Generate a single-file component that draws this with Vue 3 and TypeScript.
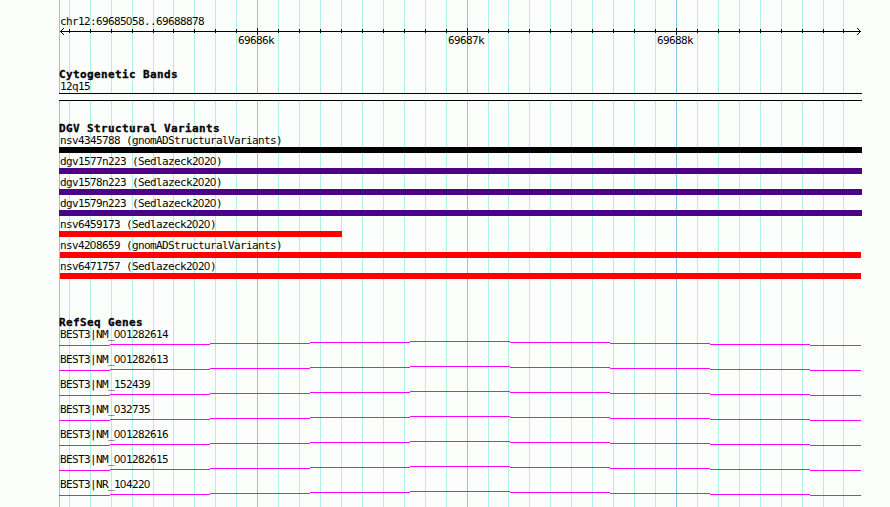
<script setup lang="ts">
interface Variant {
  name: string
  color: string
  start: number
  width: number
}

const minorLines: number[] = [
  69, 90, 111, 132, 153, 173, 194, 215, 236, 278, 299, 320, 341, 362, 383, 404,
  425, 446, 488, 508, 529, 550, 571, 592, 613, 634, 655, 697, 718, 739, 760,
  781, 802, 823, 843,
]
const majorLines = [
  { x: 257, label: '69686k' },
  { x: 467, label: '69687k' },
  { x: 676, label: '69688k' },
]

const variants: Variant[] = [
  { name: 'nsv4345788 (gnomADStructuralVariants)', color: '#040204', start: 0, width: 803 },
  { name: 'dgv1577n223 (Sedlazeck2020)', color: '#4c0284', start: 0, width: 803 },
  { name: 'dgv1578n223 (Sedlazeck2020)', color: '#4c0284', start: 0, width: 803 },
  { name: 'dgv1579n223 (Sedlazeck2020)', color: '#4c0284', start: 0, width: 803 },
  { name: 'nsv6459173 (Sedlazeck2020)', color: '#ff0000', start: 0, width: 283 },
  { name: 'nsv4208659 (gnomADStructuralVariants)', color: '#ff0000', start: 1, width: 801 },
  { name: 'nsv6471757 (Sedlazeck2020)', color: '#ff0000', start: 1, width: 801 },
]

const genes: string[] = [
  'BEST3|NM_001282614',
  'BEST3|NM_001282613',
  'BEST3|NM_152439',
  'BEST3|NM_032735',
  'BEST3|NM_001282616',
  'BEST3|NM_001282615',
  'BEST3|NR_104220',
]

// Intron line segments: [x, y, width] inside a gene row
const intron: [number, number, number][] = [
  [0, 4, 51], [51, 3, 100], [151, 2, 100], [251, 1, 100], [351, 0, 100],
  [451, 1, 100], [551, 2, 100], [651, 3, 100], [751, 4, 51],
]

// Splits a label so that zeros can be set in a face with an open zero
const parts = (s: string): string[] => s.split(/(0)/).filter((p) => p !== '')
</script>

<template>
  <main class="browser">
    <svg class="grid" width="890" height="507" shape-rendering="crispEdges">
      <rect v-for="x in minorLines" :key="x" :x="x" y="0" width="1" height="507" class="minor" />
      <rect x="59" y="0" width="1" height="507" class="major" />
      <rect v-for="m in majorLines" :key="m.x" :x="m.x" y="0" width="1" height="507" class="major" />
    </svg>

    <div class="tracks">
      <header>
        <div class="label"><span v-for="(p, i) in parts('chr12:69685058..69688878')" :key="i" :class="{ zero: p === '0' }">{{ p }}</span></div>
        <svg class="ruler" width="803" height="19" viewBox="59 28 803 19">
          <g shape-rendering="crispEdges">
            <rect x="60" y="31" width="801" height="1" />
            <rect v-for="x in minorLines" :key="x" :x="x" y="29" width="1" height="4" />
            <rect v-for="m in majorLines" :key="m.x" :x="m.x" y="28" width="1" height="7" />
            <rect x="61" y="30" width="1" height="3" />
            <rect x="62" y="29" width="1" height="1" />
            <rect x="62" y="33" width="1" height="1" />
            <rect x="63" y="28" width="1" height="1" />
            <rect x="63" y="34" width="1" height="1" />
            <rect x="859" y="30" width="1" height="3" />
            <rect x="858" y="29" width="1" height="1" />
            <rect x="858" y="33" width="1" height="1" />
            <rect x="857" y="28" width="1" height="1" />
            <rect x="857" y="34" width="1" height="1" />
          </g>
          <text v-for="m in majorLines" :key="m.label" :x="m.x - 19" y="44">{{ m.label }}</text>
        </svg>
      </header>

      <section class="cyto">
        <h2>Cytogenetic Bands</h2>
        <div class="label">12q15</div>
        <div class="band"></div>
      </section>

      <section class="variants">
        <h2>DGV Structural Variants</h2>
        <div v-for="v in variants" :key="v.name" class="variant">
          <div class="label"><span v-for="(p, i) in parts(v.name)" :key="i" :class="{ zero: p === '0' }">{{ p }}</span></div>
          <div class="bar" :style="{ background: v.color, marginLeft: v.start + 'px', width: v.width + 'px' }"></div>
        </div>
      </section>

      <section class="genes">
        <h2>RefSeq Genes</h2>
        <div v-for="g in genes" :key="g" class="gene">
          <div class="label"><span v-for="(p, i) in parts(g)" :key="i" :class="{ zero: p === '0' }">{{ p }}</span></div>
          <svg class="intron" width="803" height="5" shape-rendering="crispEdges">
            <rect v-for="s in intron" :key="s[0]" :x="s[0]" :y="s[1]" :width="s[2]" height="1" />
          </svg>
        </div>
      </section>
    </div>
  </main>
</template>

<style>
body {
  background: #fcfefc;
  overflow: hidden;
}
</style>

<style scoped>
.browser {
  position: relative;
  width: 890px;
  height: 507px;
  overflow: hidden;
  background: #fcfefc;
  color: #040204;
  font-family: "DejaVu Sans Mono", monospace;
  font-size: 11px;
  line-height: 13px;
}
.grid {
  position: absolute;
  inset: 0;
}
.minor {
  fill: #aceeec;
}
.major {
  fill: #84cee4;
}
.tracks {
  position: relative;
  width: 803px;
  padding: 15px 0 0 59px;
}
h2 {
  margin: 0;
  height: 12px;
  font-size: 11px;
  line-height: 13px;
  font-weight: bold;
  letter-spacing: 0.377px;
  -webkit-text-stroke: 0.3px #040204;
  white-space: pre;
}
.label {
  height: 13px;
  padding-left: 1px;
  letter-spacing: -0.623px;
  white-space: pre;
}
.zero {
  font-family: "Liberation Sans", Arial, sans-serif;
  letter-spacing: -0.117px;
  line-height: 0;
}
.ruler {
  display: block;
  fill: #040204;
  letter-spacing: -0.623px;
}
.cyto {
  margin-top: 21px;
}
.band {
  box-sizing: border-box;
  height: 8px;
  border: solid #040204;
  border-width: 1px 0;
  background: #fcfefc;
}
.variants {
  margin-top: 21px;
}
.variant {
  height: 21px;
}
.bar {
  height: 6px;
}
.genes {
  margin-top: 35px;
}
.gene {
  height: 25px;
}
.intron {
  display: block;
  fill: #ff00ff;
}
</style>
